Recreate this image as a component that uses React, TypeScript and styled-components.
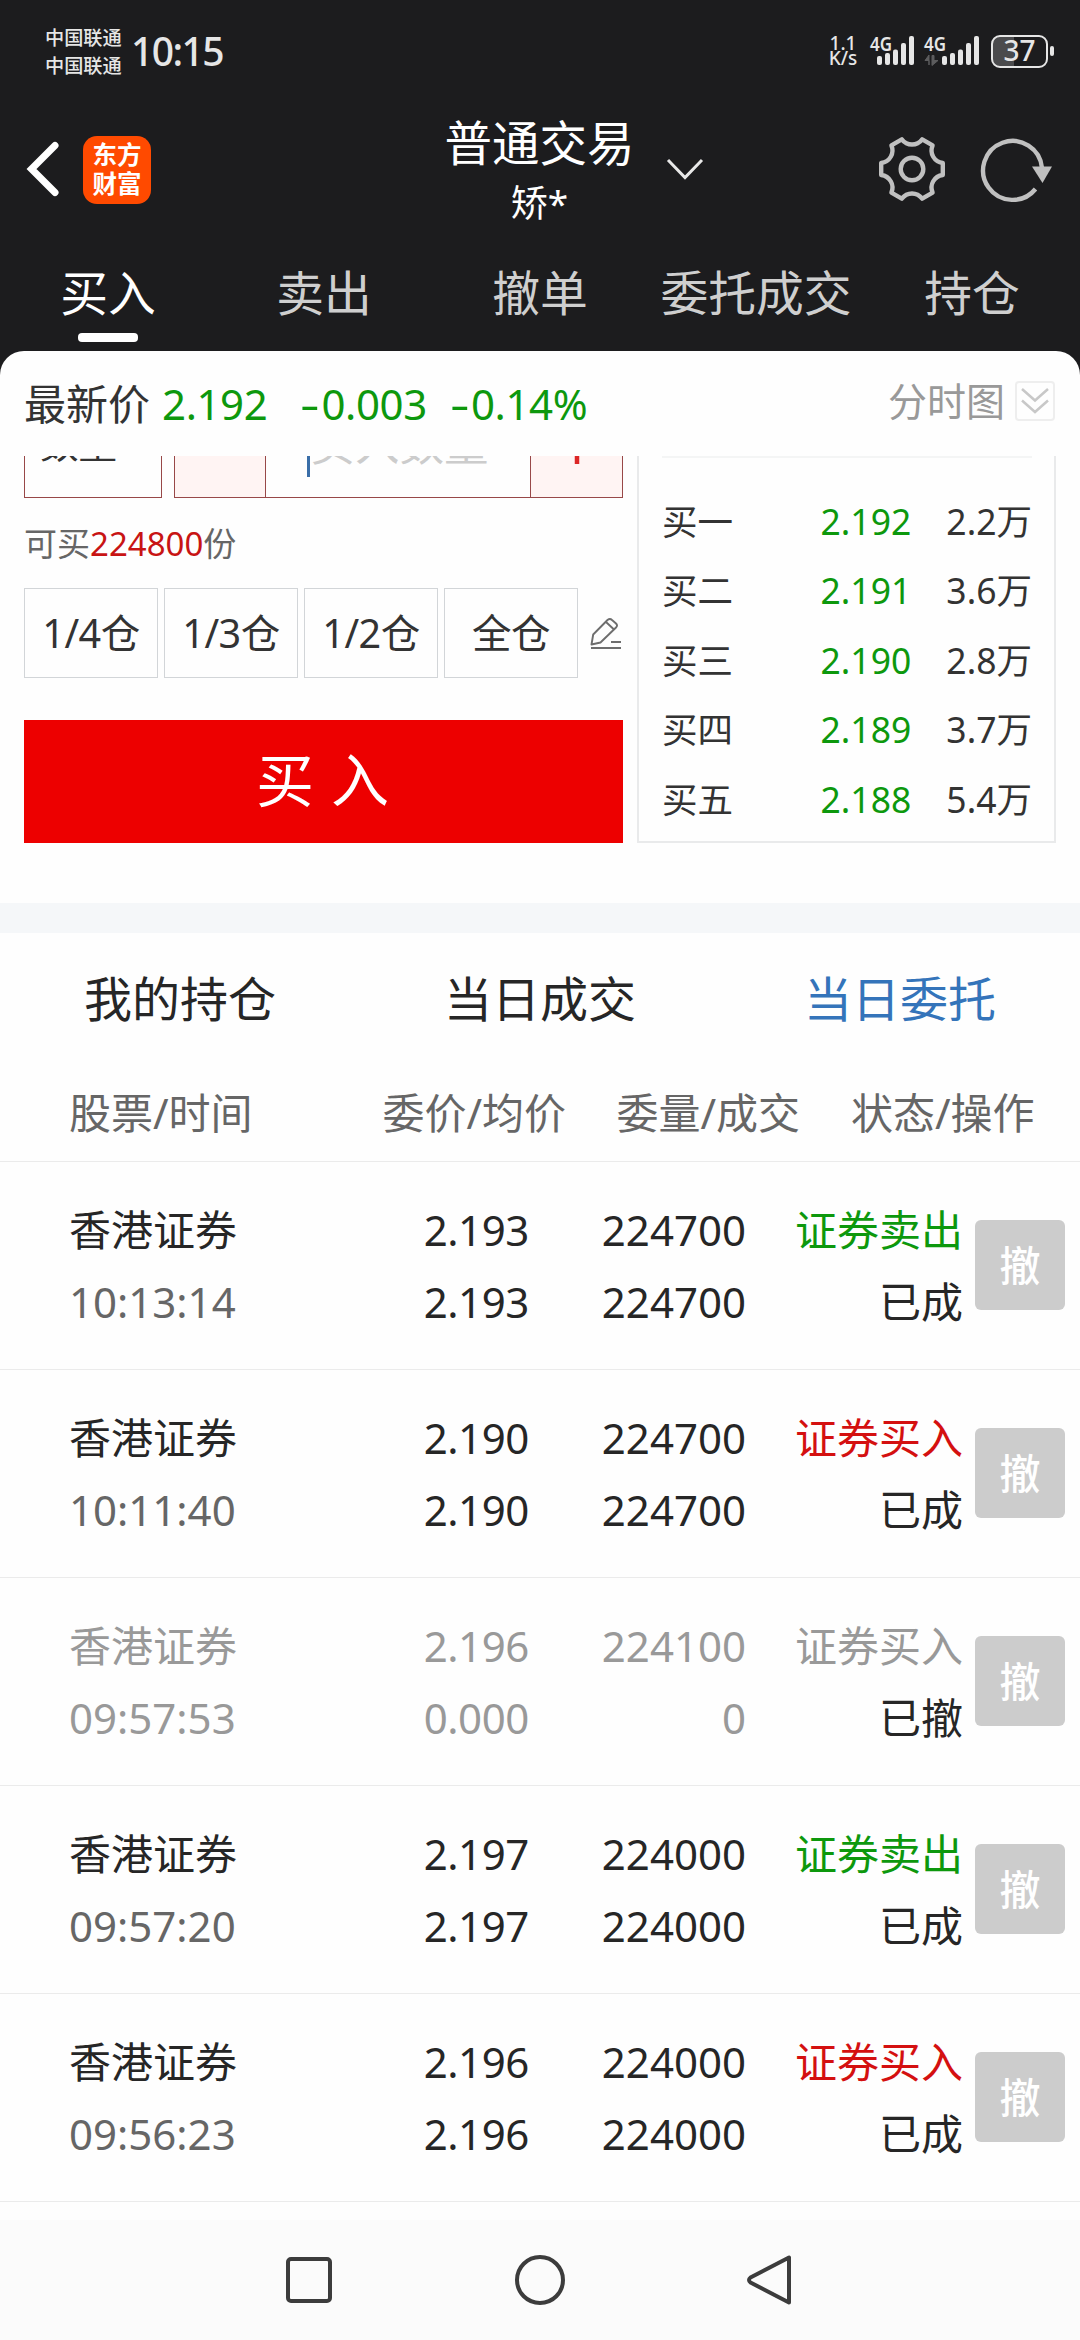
import React from "react";
import styled, { createGlobalStyle } from "styled-components";

const Global = createGlobalStyle`
  * { box-sizing: border-box; }
  body {
    margin: 0;
    background: #fefefe;
    font-family: "Noto Sans", "Noto Sans CJK SC", sans-serif;
  }
  button { font-family: inherit; }
`;

const GREEN = "#0d980d";
const RED = "#d41010";
const INK = "#262626";
const GREY = "#999";

const Page = styled.div`
  width: 1080px;
  height: 2340px;
  display: flex;
  flex-direction: column;
  background: #1c1c1e;
  overflow: hidden;
`;

/* ---------- status bar ---------- */

const StatusBar = styled.div`
  height: 102px;
  flex: none;
  display: flex;
  align-items: center;
  padding: 0 26px 0 45px;
  color: #e6e6e6;
`;

const Carriers = styled.div`
  display: flex;
  flex-direction: column;
  font-size: 19.2px;
  font-weight: 500;
  line-height: 28.5px;
  width: 86px;
  padding-top: 2px;
`;

const Clock = styled.div`
  font-size: 39px;
  font-weight: 500;
  line-height: 56px;
  letter-spacing: -1.6px;
`;

const StatusIcons = styled.div`
  margin-left: auto;
  display: flex;
  align-items: center;
`;

const NetSpeed = styled.div`
  display: flex;
  flex-direction: column;
  align-items: center;
  font-size: 19px;
  font-weight: 500;
  line-height: 15.5px;
  width: 28px;
  margin-right: 13px;
`;

const SignalSvg = styled.svg`
  display: block;
  margin-right: 6px;
`;

function Signal({ width, barsAt, idle }: { width: number; barsAt: number; idle?: boolean }) {
  const tops = [21, 18, 14.5, 8, 1];
  return (
    <SignalSvg width={width} height="32" viewBox={`0 0 ${width} 32`} fill="#e6e6e6" overflow="visible">
      <text x="0" y="15.5" fontSize="20" fontWeight="600" textLength="22" lengthAdjust="spacingAndGlyphs">
        4G
      </text>
      {tops.map((top, i) => (
        <rect key={top} x={barsAt + i * 8} y={top} width="5" height={30 - top} rx="2" />
      ))}
      {idle && <path d="M5 30V20L1 25.500H5V30ZM8 20.500V30.500L14 25.500H10V20.500Z" fill="#5c5c5e" stroke="#5c5c5e" />}
    </SignalSvg>
  );
}

const Battery = styled.div`
  width: 57px;
  height: 33px;
  border: 2px solid #e6e6e6;
  border-radius: 9px;
  background: linear-gradient(90deg, #4b4b4d 21px, transparent 21px);
  font-size: 28px;
  font-weight: 500;
  line-height: 27px;
  text-align: center;
  margin-left: 4px;
`;

const BatteryTip = styled.div`
  width: 4px;
  height: 10px;
  margin-left: 2px;
  border-radius: 2px;
  background: #e6e6e6;
`;

/* ---------- title bar ---------- */

const TitleBar = styled.header`
  height: 142px;
  flex: none;
  display: grid;
  grid-template-columns: 1fr auto 1fr;
  padding: 0 27px 8px 26px;
  align-items: center;
`;

const TitleLeft = styled.div`
  display: flex;
  align-items: center;
  gap: 23px;
`;

const Logo = styled.div`
  width: 68px;
  height: 68px;
  border-radius: 14px;
  background: #ff4a00;
  color: #fff;
  font-size: 24.5px;
  font-weight: 700;
  line-height: 29px;
  text-align: center;
  padding-top: 4px;
  margin-top: 1px;
`;

const TitleText = styled.div`
  color: #fff;
  text-align: center;
`;

const TitleMain = styled.div`
  font-size: 47.5px;
  line-height: 64px;
  margin-top: 3px;
`;

const TitleSub = styled.div`
  font-size: 37px;
  line-height: 56px;
`;

const TitleRight = styled.div`
  display: flex;
  align-items: center;
`;

const Caret = styled.svg`
  margin: 0 auto 0 30px;
`;

const RefreshSvg = styled.svg`
  margin-left: 31px;
`;

function gearPath() {
  const pt = (deg: number, x: number, y: number) => {
    const a = (deg * Math.PI) / 180;
    return `${(36 + x * Math.cos(a) - y * Math.sin(a)).toFixed(2)} ${(36 + x * Math.sin(a) + y * Math.cos(a)).toFixed(2)}`;
  };
  let d = "";
  for (let k = 0; k < 6; k++) {
    const a = k * 60;
    d += `${k ? "L" : "M"}${pt(a, 30.8, -6)}L${pt(a, 30.8, 6)}`;
    d += `C${pt(a + 30, 25.5, -7)} ${pt(a + 30, 24.5, -4)} ${pt(a + 30, 24.5, 0)}`;
    d += `C${pt(a + 30, 24.5, 4)} ${pt(a + 30, 25.5, 7)} ${pt(a + 60, 30.8, -6)}`;
  }
  return d + "Z";
}

/* ---------- primary tabs ---------- */

const MainTabs = styled.nav`
  height: 107px;
  flex: none;
  display: grid;
  grid-template-columns: repeat(5, 1fr);
`;

const MainTab = styled.div<{ $active?: boolean }>`
  display: flex;
  flex-direction: column;
  align-items: center;
  font-size: 47.8px;
  line-height: 68px;
  padding-top: 15px;
  white-space: nowrap;
  color: ${(p) => (p.$active ? "#fff" : "#cfcfcf")};
  &::after {
    content: "";
    width: 60px;
    height: 9px;
    margin-top: 6px;
    border-radius: 4px;
    background: ${(p) => (p.$active ? "#fff" : "transparent")};
  }
`;

/* ---------- sheet ---------- */

const Sheet = styled.main`
  flex: 1;
  min-height: 0;
  display: flex;
  flex-direction: column;
  background: #fefefe;
  border-radius: 24px 24px 0 0;
  overflow: hidden;
`;

const QuoteBar = styled.div`
  height: 105px;
  flex: none;
  display: flex;
  align-items: center;
  padding: 0 25px 0 24px;
  font-size: 42px;
  line-height: 60px;
  white-space: pre;
  color: #333;
`;

const QuoteValue = styled.span<{ $gap: number }>`
  color: ${GREEN};
  margin-left: ${(p) => p.$gap}px;
  letter-spacing: -0.4px;
`;

const Minus = styled.span`
  display: inline-block;
  margin-right: 8px;
  transform: scaleX(1.45);
  transform-origin: left;
`;

const ChartToggle = styled.div`
  margin-left: auto;
  display: flex;
  align-items: center;
  gap: 10px;
  font-size: 39px;
  line-height: 56px;
  color: ${GREY};
  margin-bottom: 5px;
`;

const ExpandBox = styled.div`
  width: 40px;
  height: 40px;
  border: 2px solid #eeeeee;
  border-radius: 4px;
  display: flex;
  align-items: center;
  justify-content: center;
`;

const Viewport = styled.section`
  height: 447px;
  flex: none;
  overflow: hidden;
`;

const TradeArea = styled.div`
  margin-top: -66px;
  height: 453px;
  padding: 0 24px;
  display: flex;
  gap: 14px;
`;

const Form = styled.div`
  width: 599px;
  display: flex;
  flex-direction: column;
`;

const FieldRow = styled.div`
  display: flex;
  gap: 12px;
  height: 108px;
`;

const FieldLabel = styled.div`
  width: 138px;
  border: 1px solid #984848;
  padding-left: 15px;
  font-size: 38.5px;
  line-height: 104px;
  color: #333;
`;

const Stepper = styled.div`
  width: 449px;
  display: grid;
  grid-template-columns: 91px 1fr 92px;
  border: 1px solid #984848;
`;

const StepCell = styled.div`
  background: #fff4f3;
  display: flex;
  align-items: center;
  justify-content: center;
  &:first-child { border-right: 1px solid #984848; }
  &:last-child { border-left: 1px solid #984848; }
`;

const StepInput = styled.div`
  display: flex;
  align-items: center;
  justify-content: center;
  font-size: 44.5px;
  line-height: 60px;
  color: #ccc;
  &::before {
    content: "";
    width: 3px;
    height: 66px;
    background: #3a6ea8;
  }
`;

const Available = styled.div`
  font-size: 33px;
  line-height: 48px;
  margin-top: 22px;
  color: #666;
  em { font-style: normal; color: #c81414; }
`;

const Fractions = styled.div`
  display: flex;
  align-items: center;
  gap: 6px;
  margin-top: 20px;
`;

const Fraction = styled.button`
  width: 134px;
  height: 90px;
  padding: 0 0 4px;
  border: 1px solid #d2d5d8;
  background: transparent;
  font-size: 39.5px;
  letter-spacing: -0.5px;
  color: #333;
`;

const EditIcon = styled.svg`
  margin-left: 5px;
`;

const BuyButton = styled.button`
  height: 123px;
  margin-top: 42px;
  border: 0;
  background: #ed0000;
  color: #fff;
  font-size: 58px;
  padding: 0 2px 10px 0;
  word-spacing: 2px;
`;

const Book = styled.div`
  width: 419px;
  border: 2px solid #e9eaeb;
  padding: 64px 22px 0 23px;
`;

const BookList = styled.div`
  border-top: 2px solid #f4f5f5;
  padding-top: 28px;
  display: flex;
  flex-direction: column;
`;

const BookRow = styled.div`
  height: 69.500px;
  display: grid;
  grid-template-columns: 158.5px 1fr auto;
  align-items: center;
  font-size: 35.5px;
  line-height: 50px;
  color: #333;
`;

const BookPrice = styled.span`
  color: ${GREEN};
`;

const Band = styled.div`
  height: 30px;
  flex: none;
  background: #f5f7f9;
`;

/* ---------- orders ---------- */

const ListTabs = styled.nav`
  height: 132px;
  flex: none;
  display: grid;
  grid-template-columns: repeat(3, 1fr);
  text-align: center;
  font-size: 48px;
  line-height: 132px;
`;

const ListTab = styled.div<{ $active?: boolean }>`
  color: ${(p) => (p.$active ? "#3474ba" : INK)};
`;

const TableHead = styled.div`
  height: 97px;
  flex: none;
  display: grid;
  grid-template-columns: 313.5px 234px 234.5px 1fr;
  padding-left: 69px;
  font-size: 42px;
  line-height: 95px;
  color: #666;
  border-bottom: 1px solid #ebebeb;
`;

const OrderRow = styled.div<{ $void?: boolean }>`
  height: 208px;
  flex: none;
  display: grid;
  grid-template-columns: 230px 230px 217px 217px 102px;
  padding-left: 69px;
  align-items: center;
  font-size: 42px;
  border-bottom: 1px solid #ebebeb;
  color: ${(p) => (p.$void ? GREY : INK)};
`;

const Cell = styled.div<{ $right?: boolean }>`
  display: flex;
  flex-direction: column;
  line-height: 72px;
  margin-top: 1px;
  white-space: nowrap;
  text-align: ${(p) => (p.$right ? "right" : "left")};
`;

const Price = styled.span`
  letter-spacing: -0.4px;
`;

const Time = styled.span<{ $void?: boolean }>`
  color: ${(p) => (p.$void ? GREY : "#666")};
`;

const Side = styled.span<{ $tone: string }>`
  color: ${(p) => p.$tone};
`;

const State = styled.span`
  color: ${INK};
`;

const CancelButton = styled.button`
  width: 90px;
  height: 90px;
  margin: -1px 0 0 12px;
  padding: 0 0 4px;
  border: 0;
  border-radius: 6px;
  background: #ccc;
  color: #fff;
  font-size: 41px;
  font-weight: 500;
`;

const Rest = styled.div`
  flex: 1;
`;

const NavBar = styled.footer`
  height: 120px;
  flex: none;
  background: #fbfbfb;
  display: flex;
  align-items: center;
  justify-content: center;
  gap: 177px;
`;

const orders = [
  { time: "10:13:14", price: "2.193", avg: "2.193", qty: "224700", done: "224700", side: "证券卖出", tone: GREEN, state: "已成" },
  { time: "10:11:40", price: "2.190", avg: "2.190", qty: "224700", done: "224700", side: "证券买入", tone: RED, state: "已成" },
  { time: "09:57:53", price: "2.196", avg: "0.000", qty: "224100", done: "0", side: "证券买入", tone: GREY, state: "已撤", off: true },
  { time: "09:57:20", price: "2.197", avg: "2.197", qty: "224000", done: "224000", side: "证券卖出", tone: GREEN, state: "已成" },
  { time: "09:56:23", price: "2.196", avg: "2.196", qty: "224000", done: "224000", side: "证券买入", tone: RED, state: "已成" },
];

const bids = [
  ["买一", "2.192", "2.2万"],
  ["买二", "2.191", "3.6万"],
  ["买三", "2.190", "2.8万"],
  ["买四", "2.189", "3.7万"],
  ["买五", "2.188", "5.4万"],
];

export default function App() {
  return (
    <Page>
      <Global />
      <StatusBar>
        <Carriers>
          <span>中国联通</span>
          <span>中国联通</span>
        </Carriers>
        <Clock>10:15</Clock>
        <StatusIcons>
          <NetSpeed>
            <span>1.1</span>
            <span>K/s</span>
          </NetSpeed>
          <Signal width={48} barsAt={7} />
          <Signal width={57} barsAt={18} idle />
          <Battery>37</Battery>
          <BatteryTip />
        </StatusIcons>
      </StatusBar>

      <TitleBar>
        <TitleLeft>
          <svg width="34" height="58" viewBox="0 0 34 58" fill="none" stroke="#fff" strokeWidth="7" strokeLinecap="round">
            <path d="M29 5.500L5.500 29L29 52.500" strokeLinejoin="miter" />
          </svg>
          <Logo>
            <div>东方</div>
            <div>财富</div>
          </Logo>
        </TitleLeft>
        <TitleText>
          <TitleMain>普通交易</TitleMain>
          <TitleSub>矫*</TitleSub>
        </TitleText>
        <TitleRight>
          <Caret width="40" height="24" viewBox="0 0 40 24" fill="none" stroke="#e8e8e8" strokeWidth="3">
            <path d="M3 3L20 20.500L37 3" />
          </Caret>
          <svg width="72" height="72" viewBox="0 0 72 72" fill="none" stroke="#c0c0c0" strokeWidth="4.400" strokeLinejoin="round">
            <path d={gearPath()} />
            <circle cx="36" cy="36" r="11.300" />
          </svg>
          <RefreshSvg width="74" height="72" viewBox="0 0 74 72" fill="none" stroke="#c0c0c0" strokeWidth="4.400">
            <path d="M56.500 56A29.500 29.500 0 1 1 63 35" />
            <path d="M53 33.500H73L63.500 50Z" fill="#c0c0c0" stroke="none" />
          </RefreshSvg>
        </TitleRight>
      </TitleBar>

      <MainTabs>
        <MainTab $active>买入</MainTab>
        <MainTab>卖出</MainTab>
        <MainTab>撤单</MainTab>
        <MainTab>委托成交</MainTab>
        <MainTab>持仓</MainTab>
      </MainTabs>

      <Sheet>
        <QuoteBar>
          最新价
          <QuoteValue $gap={12}>2.192</QuoteValue>
          <QuoteValue $gap={33}><Minus>-</Minus>0.003</QuoteValue>
          <QuoteValue $gap={23}><Minus>-</Minus>0.14%</QuoteValue>
          <ChartToggle>
            分时图
            <ExpandBox>
              <svg width="30" height="28" viewBox="0 0 30 28" fill="none" stroke="#c8c8c8" strokeWidth="2.500">
                <path d="M2 2L15 13.500L28 2M2 13.500L15 25L28 13.500" />
              </svg>
            </ExpandBox>
          </ChartToggle>
        </QuoteBar>

        <Viewport>
          <TradeArea>
            <Form>
              <FieldRow>
                <FieldLabel>数量</FieldLabel>
                <Stepper>
                  <StepCell />
                  <StepInput>买入数量</StepInput>
                  <StepCell>
                    <svg width="40" height="40" viewBox="0 0 40 40" stroke="#dc2626" strokeWidth="4.500">
                      <path d="M20 0V40M0 20H40" />
                    </svg>
                  </StepCell>
                </Stepper>
              </FieldRow>
              <Available>
                可买<em>224800</em>份
              </Available>
              <Fractions>
                <Fraction>1/4仓</Fraction>
                <Fraction>1/3仓</Fraction>
                <Fraction>1/2仓</Fraction>
                <Fraction>全仓</Fraction>
                <EditIcon width="34" height="33" viewBox="0 0 34 33" fill="none" stroke="#6e6e6e" strokeWidth="1.900" strokeLinejoin="round">
                  <path d="M2.500 27.500L4.200 17.500L18.500 3Q21 1 23 3L27 6.500Q29 8.500 27 10.500L11.500 25.500ZM17 5L25 12.500M22 25H32M2 31H32" />
                </EditIcon>
              </Fractions>
              <BuyButton>买 入</BuyButton>
            </Form>
            <Book>
              <BookList>
                {bids.map(([name, price, vol]) => (
                  <BookRow key={name}>
                    <span>{name}</span>
                    <BookPrice>{price}</BookPrice>
                    <span>{vol}</span>
                  </BookRow>
                ))}
              </BookList>
            </Book>
          </TradeArea>
        </Viewport>

        <Band />

        <ListTabs>
          <ListTab>我的持仓</ListTab>
          <ListTab>当日成交</ListTab>
          <ListTab $active>当日委托</ListTab>
        </ListTabs>
        <TableHead>
          <span>股票/时间</span>
          <span>委价/均价</span>
          <span>委量/成交</span>
          <span>状态/操作</span>
        </TableHead>
        {orders.map((o) => (
          <OrderRow key={o.time} $void={o.off}>
            <Cell>
              <span>香港证券</span>
              <Time $void={o.off}>{o.time}</Time>
            </Cell>
            <Cell $right>
              <Price>{o.price}</Price>
              <Price>{o.avg}</Price>
            </Cell>
            <Cell $right>
              <span>{o.qty}</span>
              <span>{o.done}</span>
            </Cell>
            <Cell $right>
              <Side $tone={o.tone}>{o.side}</Side>
              <State>{o.state}</State>
            </Cell>
            <CancelButton>撤</CancelButton>
          </OrderRow>
        ))}
        <Rest />
        <NavBar>
          <svg width="54" height="54" viewBox="0 0 54 54" fill="none" stroke="#3c3c3c" strokeWidth="4">
            <rect x="6" y="6" width="42" height="42" rx="3" />
          </svg>
          <svg width="54" height="54" viewBox="0 0 54 54" fill="none" stroke="#3c3c3c" strokeWidth="4">
            <circle cx="27" cy="27" r="23" />
          </svg>
          <svg width="54" height="54" viewBox="0 0 54 54" fill="none" stroke="#3c3c3c" strokeWidth="4" strokeLinejoin="round">
            <path d="M45 4.500V49.500L6.500 29.500Q3.500 27 6.500 24.500Z" />
          </svg>
        </NavBar>
      </Sheet>
    </Page>
  );
}
